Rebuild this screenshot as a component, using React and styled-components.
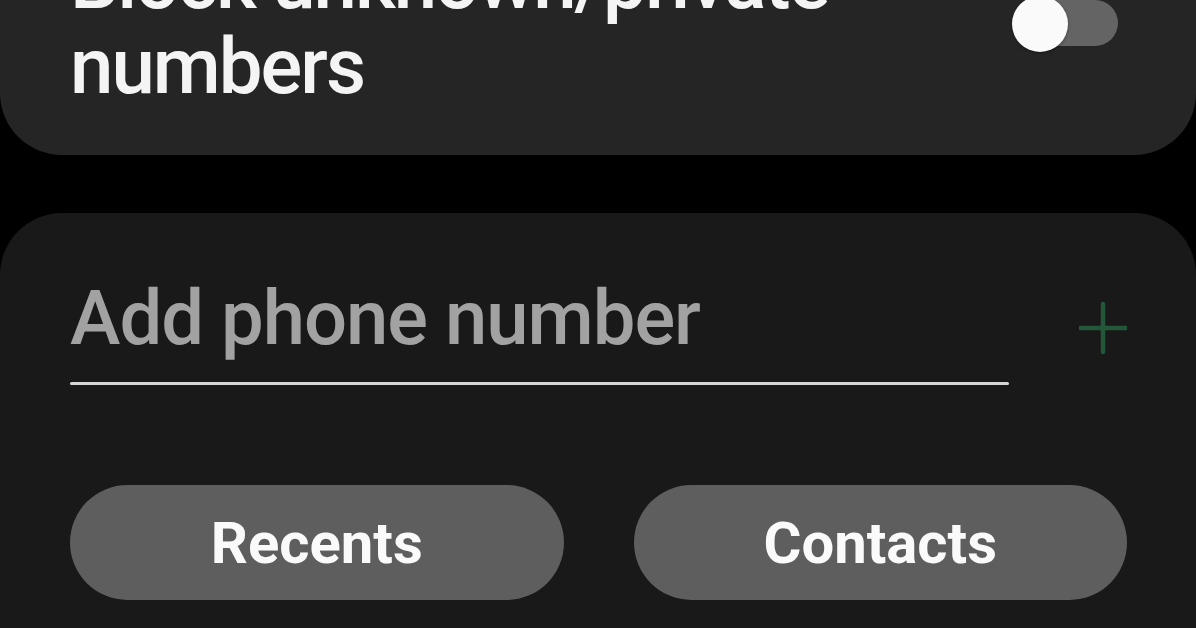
import React from 'react'
import styled, { createGlobalStyle } from 'styled-components'

const GlobalStyle = createGlobalStyle`
  html, body {
    margin: 0;
    padding: 0;
    background: #000;
    overflow: hidden;
  }
  body {
    font-family: Roboto, "Noto Sans", "Liberation Sans", sans-serif;
  }
`

const Screen = styled.div`
  width: 1196px;
  height: 628px;
  overflow: hidden;
  background: #000;
  display: flex;
  flex-direction: column;
  gap: 58px;
`

const Card = styled.section`
  background: ${props => props.tone};
  border-radius: 62px;
  flex-shrink: 0;
`

const SettingCard = styled(Card)`
  margin-top: -101px;
  padding: 40px 78px 46px 70px;
  display: flex;
  align-items: center;
  justify-content: space-between;
`

const SettingLabel = styled.div`
  color: #f4f4f4;
  font-size: 78px;
  font-weight: 500;
  line-height: 85px;
  letter-spacing: -2px;
  max-width: 860px;
`

const Switch = styled.div`
  position: relative;
  width: 106px;
  height: 56px;
  flex-shrink: 0;
`

const Track = styled.div`
  position: absolute;
  left: 10px;
  right: 0;
  top: 4px;
  height: 46px;
  border-radius: 23px;
  background: #646464;
`

const Thumb = styled.div`
  position: absolute;
  left: 0;
  top: 0;
  width: 56px;
  height: 56px;
  border-radius: 50%;
  background: #fafafa;
  box-shadow: 0 1px 3px rgba(0, 0, 0, 0.4);
`

const NumberCard = styled(Card)`
  padding: 58px 69px 60px 70px;
  display: flex;
  flex-direction: column;
  gap: 100px;
  min-height: 500px;
`

const InputRow = styled.div`
  display: flex;
  align-items: center;
  gap: 70px;
`

const Field = styled.label`
  flex: 1;
  display: flex;
  flex-direction: column;
  gap: 17px;
`

const Input = styled.input`
  background: transparent;
  border: none;
  outline: none;
  padding: 0;
  margin: 0;
  width: 100%;
  height: 94px;
  font-family: Roboto, "Noto Sans", "Liberation Sans", sans-serif;
  font-size: 76px;
  font-weight: 500;
  letter-spacing: -1px;
  color: #f4f4f4;

  &::placeholder {
    color: #a2a2a2;
    opacity: 1;
  }
`

const Underline = styled.div`
  height: 3px;
  background: #d6d6d6;
  border-radius: 2px;
`

const AddButton = styled.button`
  width: 48px;
  height: 56px;
  padding: 0;
  border: none;
  background: none;
  display: flex;
  align-items: center;
  justify-content: center;
`

const ButtonRow = styled.div`
  display: grid;
  grid-template-columns: 1fr 1fr;
  gap: 70px;
`

const PillButton = styled.button`
  height: 115px;
  border: none;
  border-radius: 58px;
  background: #5e5e5e;
  color: #fafafa;
  font-family: Roboto, "Noto Sans", "Liberation Sans", sans-serif;
  font-size: 58px;
  font-weight: 700;
  padding: 0;
`

const PlusIcon = () => (
  <svg width="48" height="56" viewBox="0 0 48 56">
    <path d="M24 4 V52 M1 28 H47" stroke="#22573a" strokeWidth="4.5" strokeLinecap="round" />
  </svg>
)

export default function App () {
  return (
    <>
      <GlobalStyle />
      <Screen>
        <SettingCard tone="#252525">
          <SettingLabel>Block unknown/private numbers</SettingLabel>
          <Switch>
            <Track />
            <Thumb />
          </Switch>
        </SettingCard>
        <NumberCard tone="#191919">
          <InputRow>
            <Field>
              <Input placeholder="Add phone number" />
              <Underline />
            </Field>
            <AddButton aria-label="Add">
              <PlusIcon />
            </AddButton>
          </InputRow>
          <ButtonRow>
            <PillButton>Recents</PillButton>
            <PillButton>Contacts</PillButton>
          </ButtonRow>
        </NumberCard>
      </Screen>
    </>
  )
}
